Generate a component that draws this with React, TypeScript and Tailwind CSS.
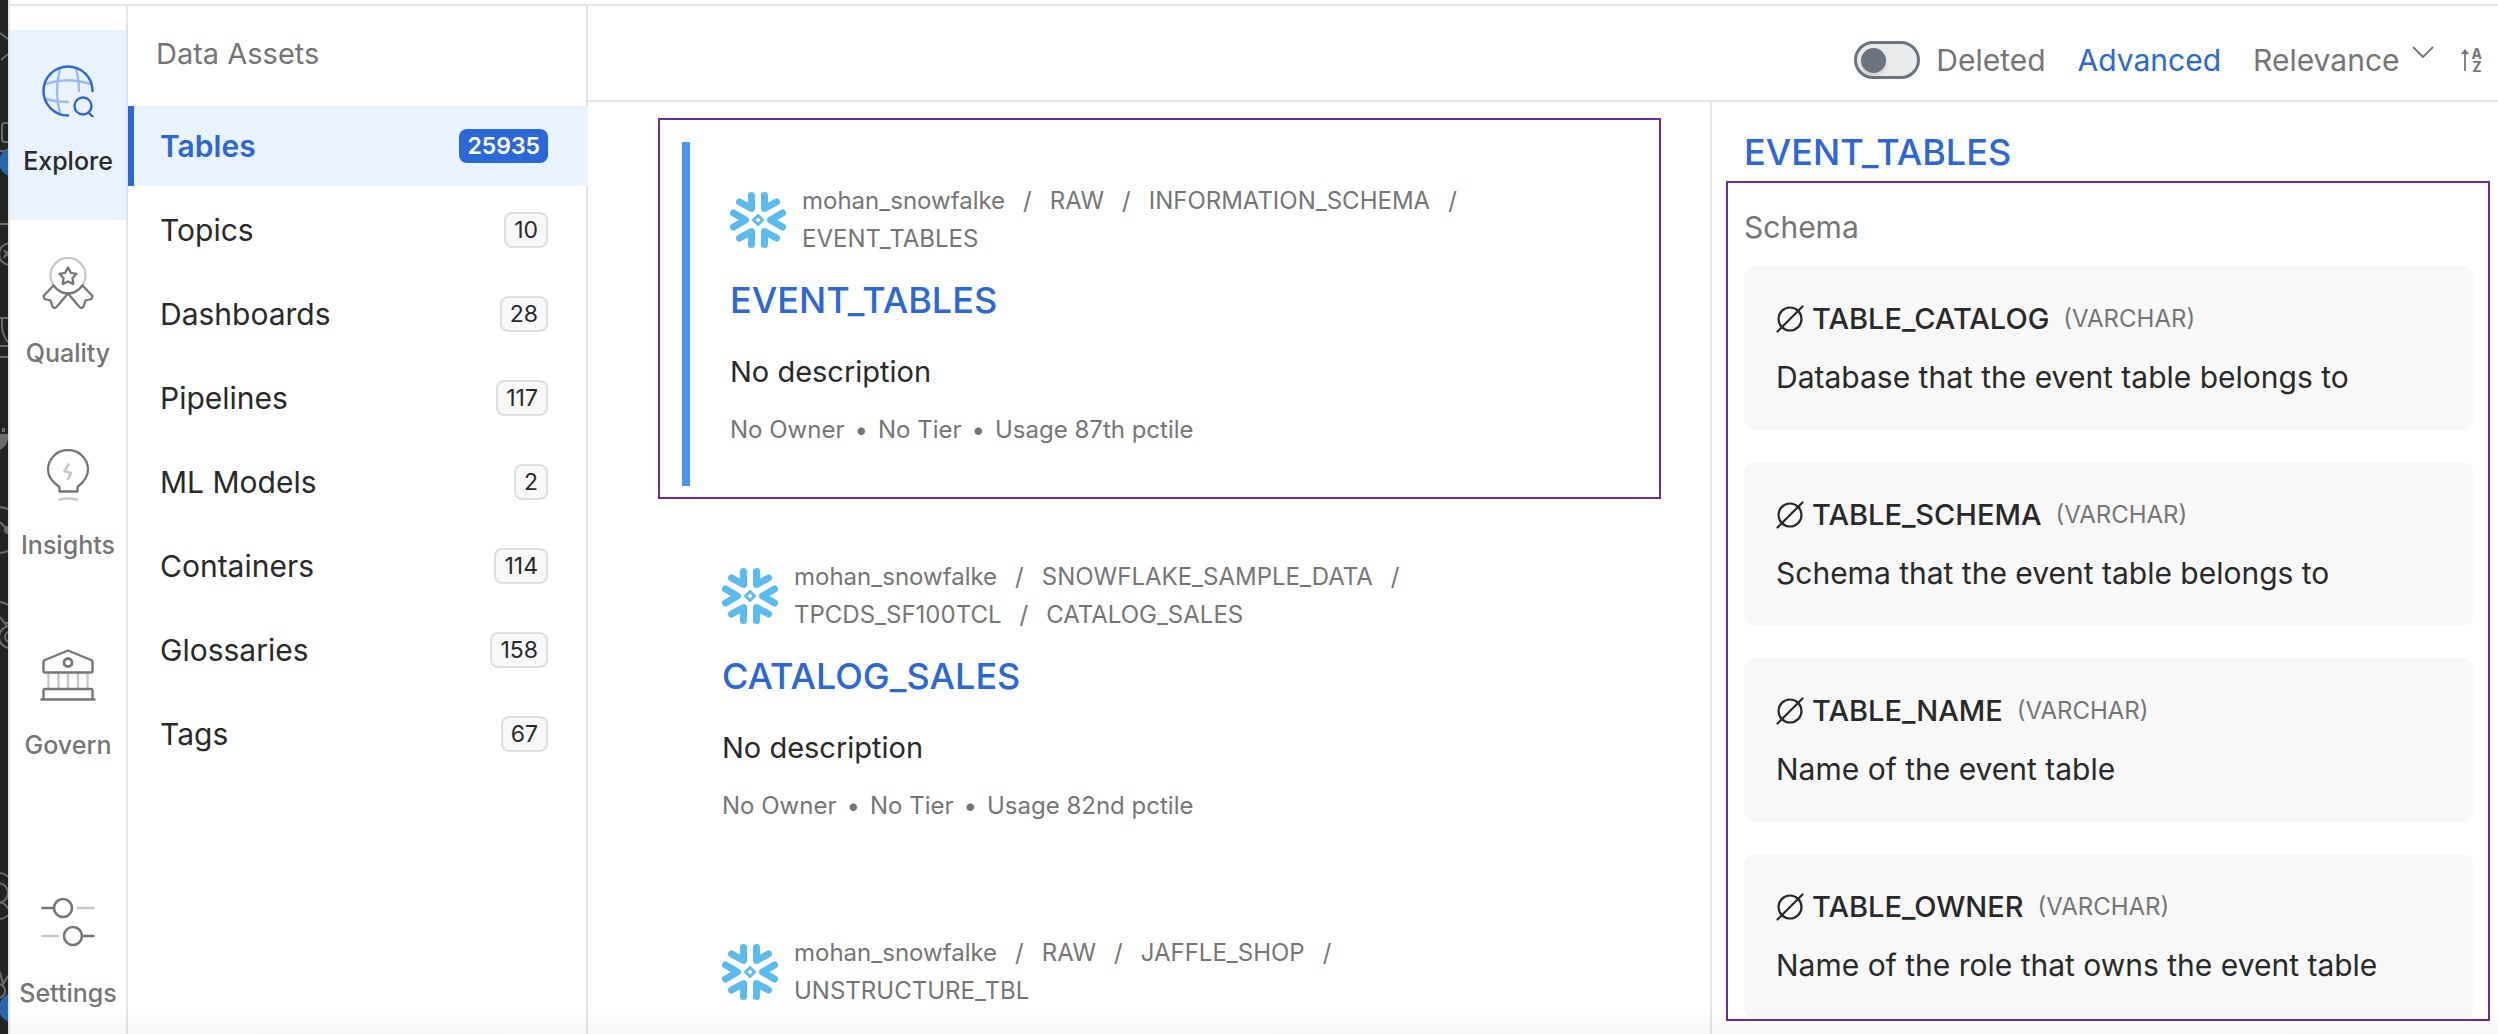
import React from "react";

const BLUE = "#2c67d6";

const Glyphs = {
  explore: (
    <svg viewBox="0 0 52 52" className="size-[52px]" fill="none" stroke={BLUE} strokeWidth="2.4" strokeLinecap="round">
      <path d="M50.500 26A24.500 24.500 0 1 0 26 50.500" />
      <circle cx="41" cy="41" r="8.500" />
      <path d="M46.500 47.500L50.500 51.500" />
      <g opacity="0.4">
        <path d="M5 18.500Q26 12 47 18.500" />
        <path d="M4 34Q14 37 26 37" />
        <path d="M18 4Q12 26 18 48" />
        <path d="M34 4Q37 14 37 26" />
      </g>
    </svg>
  ),
  quality: (
    <svg viewBox="0 0 52 52" className="size-[52px]" fill="none" stroke="#757575" strokeWidth="2.3" strokeLinejoin="round" strokeLinecap="round">
      <path d="M12.500 29.500A17.500 17.500 0 1 1 39.500 29.500" opacity="0.4" />
      <path d="M12 29Q18 36.500 26 36.500Q34 36.500 40 29" />
      <path d="M26 10.500L28.800 15.800L34.500 16.800L30.500 21L31.300 27L26 24.500L20.700 27L21.500 21L17.500 16.800L23.200 15.800Z" />
      <path d="M11.500 28.500L1.500 39L2.500 42L8.500 43.500L10.500 49.500Q12.500 52 14.500 50L26 36.500L37.500 50Q39.500 52 41.500 49.500L43.500 43.500L49.500 42L50.500 39L40.500 28.500" />
    </svg>
  ),
  insights: (
    <svg viewBox="0 0 52 52" className="size-[52px]" fill="none" stroke="#757575" strokeWidth="2.3" strokeLinejoin="round" strokeLinecap="round">
      <path d="M17.500 42.500V38C10 33 6 28 6 20.500A20 19.500 0 0 1 46 20.500C46 28 42 33 35.500 38V42.500Z" />
      <path d="M26.500 15.500L22.500 22L29 24L26 30M17.500 50.500Q26 48.500 35 50.500" opacity="0.4" strokeWidth="2.600" />
    </svg>
  ),
  govern: (
    <svg viewBox="0 0 56 52" className="h-[52px] w-14" fill="none" stroke="#757575" strokeWidth="2.4" strokeLinejoin="round" strokeLinecap="round">
      <path d="M3.500 13Q3.500 11.500 5 11L28 1.500L51 11Q52.500 11.500 52.500 13V22Q52.500 23.500 51 23.500H5Q3.500 23.500 3.500 22Z" />
      <circle cx="28" cy="13.500" r="4" strokeWidth="2.8" />
      <path d="M3.500 50V42Q3.500 40 5.500 40H50.500Q52.500 40 52.500 42V50M1.500 50.500H54.500" />
      <path d="M8.500 25V39M18.500 25V39M28 25V39M38 25V39M47.500 25V39" opacity="0.4" />
    </svg>
  ),
  settings: (
    <svg viewBox="0 0 54 52" className="h-[52px] w-[54px]" fill="none" stroke="#757575" strokeWidth="2.6" strokeLinecap="round">
      <circle cx="22" cy="11" r="9" />
      <circle cx="32" cy="39" r="9" />
      <path d="M1.500 11H12M42 39H52.500" />
      <path d="M37 11H52.500M1.500 39H17" opacity="0.4" />
    </svg>
  ),
};

function WindowEdge() {
  return (
    <svg viewBox="0 0 8 1034" preserveAspectRatio="xMinYMin slice" className="h-full w-2 shrink-0 bg-[#232323]" fill="none" stroke="#6b6b6b" strokeWidth="2">
      <path d="M0 33L8 39M1 60L8 54M8 123H5Q2 123 2 126V139Q2 142 5 142H8M0 151H8M0 224H8" />
      <circle cx="14" cy="162" r="15" fill="#2b66ad" stroke="none" />
      <circle cx="10" cy="254" r="11" />
      <path d="M4 250L8 256M8 251L4 258M0 318H8M2 318V328Q3 336 8 342M0 346H8M0 357H8" />
      <path d="M0 434H8V440Q6 447 0 450Z M2 428H5V432H2Z" fill="#6b6b6b" stroke="none" />
      <circle cx="-2" cy="530" r="23" />
      <circle cx="8" cy="530" r="4" fill="#6b6b6b" stroke="none" />
      <path d="M0 522L6 528M0 602Q6 603 8 605M0 617L7 626M8 623H4" />
      <circle cx="10" cy="637" r="11" />
      <circle cx="10" cy="637" r="5" />
      <path d="M0 873Q6 874 8 877M0 919Q6 918 8 915" />
      <circle cx="-2" cy="893" r="10" />
      <path d="M0 902Q6 904 8 909M0 972L3 984L8 976" />
      <circle cx="-2" cy="991" r="7" />
      <circle cx="14" cy="1008" r="15" fill="#2b66ad" stroke="none" />
    </svg>
  );
}

function NavItem({ label, icon, active = false, className = "" }: { label: string; icon: React.ReactNode; active?: boolean; className?: string }) {
  return (
    <a
      href="#"
      className={`flex flex-col items-center gap-7 pt-[35px] pb-[43px] text-[25px] leading-8 font-medium ${active ? "bg-[#e8f3ff] text-[#292929]" : "text-[#757575]"} ${className}`}
    >
      {icon}
      <span>{label}</span>
    </a>
  );
}

function Snowflake() {
  return (
    <svg viewBox="0 0 56 56" className="size-14 shrink-0" fill="none" stroke="#5bbbee" strokeWidth="7" strokeLinecap="round" strokeLinejoin="round">
      <path d="M21.500 3.500V16.500L9.500 10M34.500 3.500V16.500L46.500 10" />
      <path d="M21.500 52.500V39.500L9.500 46M34.500 52.500V39.500L46.500 46" />
      <path d="M3.500 21L15.500 28L3.500 35M52.500 21L40.500 28L52.500 35" />
      <path d="M28 23.500L32.500 28L28 32.500L23.500 28Z" strokeWidth="3" />
    </svg>
  );
}

const assets = [
  ["Tables", "25935"],
  ["Topics", "10"],
  ["Dashboards", "28"],
  ["Pipelines", "117"],
  ["ML Models", "2"],
  ["Containers", "114"],
  ["Glossaries", "158"],
  ["Tags", "67"],
];

function AssetRow({ name, count, active }: { name: string; count: string; active: boolean }) {
  return (
    <button
      type="button"
      className={`flex h-20 items-center justify-between border-l-[6px] pl-[26px] text-left text-[30px] ${active ? "-mr-0.5 border-[#2c67d6] bg-[#e8f3ff] pr-10 font-semibold text-[#2c67d6]" : "border-transparent pr-[38px] text-[#292929]"}`}
    >
      <span>{name}</span>
      <span
        className={`rounded-lg px-2 text-[23px] leading-8 ${active ? "bg-[#2c67d6] py-px text-white" : "border-2 border-[#dedede] bg-[#f8f8f8]"}`}
      >
        {count}
      </span>
    </button>
  );
}

type Result = { path: string[]; title?: string; usage?: string };

const results: Result[] = [
  { path: ["mohan_snowfalke", "RAW", "INFORMATION_SCHEMA", "EVENT_TABLES"], title: "EVENT_TABLES", usage: "Usage 87th pctile" },
  { path: ["mohan_snowfalke", "SNOWFLAKE_SAMPLE_DATA", "TPCDS_SF100TCL", "CATALOG_SALES"], title: "CATALOG_SALES", usage: "Usage 82nd pctile" },
  { path: ["mohan_snowfalke", "RAW", "JAFFLE_SHOP", "UNSTRUCTURE_TBL"] },
];

function ResultCard({ item, selected = false }: { item: Result; selected?: boolean }) {
  return (
    <article className={`pt-10 pl-10 ${item.title ? "pb-10" : ""} ${selected ? "border-l-8 border-[#4a94ee]" : ""}`}>
      <div className="flex items-center gap-4">
        <Snowflake />
        <nav aria-label="Breadcrumb" className="flex max-w-[700px] flex-wrap text-[24px] leading-[38px] text-[#757575]">
          {item.path.map((part, i) => (
            <span key={part} className="whitespace-nowrap">
              <a href="#">{part}</a>
              {i < item.path.length - 1 && <span className="mx-[18px]">/</span>}
            </span>
          ))}
        </nav>
      </div>
      {item.title && (
        <>
          <h2 className="mt-5 text-[36px] leading-11 font-medium text-[#2c67d6]">
            <a href="#">{item.title}</a>
          </h2>
          <p className="mt-[30px] text-[29px] leading-10 text-[#292929]">No description</p>
          <p className="mt-[22px] flex gap-2.5 text-[24px] leading-8 text-[#757575]">
            <span>No Owner</span>
            <span>•</span>
            <span>No Tier</span>
            <span>•</span>
            <span>{item.usage}</span>
          </p>
        </>
      )}
    </article>
  );
}

const columns = [
  ["TABLE_CATALOG", "Database that the event table belongs to"],
  ["TABLE_SCHEMA", "Schema that the event table belongs to"],
  ["TABLE_NAME", "Name of the event table"],
  ["TABLE_OWNER", "Name of the role that owns the event table"],
];

function ColumnCard({ name, text }: { name: string; text: string }) {
  return (
    <li className="rounded-xl bg-[#f8f8f8] p-8">
      <div className="flex items-center gap-2 leading-[42px]">
        <svg viewBox="0 0 28 28" className="size-7 shrink-0" fill="none" stroke="#292929" strokeWidth="2.2" strokeLinecap="round">
          <circle cx="14" cy="14" r="11.500" />
          <path d="M1.500 26.500L26.500 1.500" />
        </svg>
        <span className="text-[29px] font-medium text-[#292929]">{name}</span>
        <span className="ml-1.5 text-[24px] text-[#757575]">(VARCHAR)</span>
      </div>
      <p className="mt-4 text-[30px] leading-[42px] text-[#292929]">{text}</p>
    </li>
  );
}

export default function App() {
  return (
    <div className="relative flex h-screen overflow-hidden bg-white font-[Inter,sans-serif]">
      <WindowEdge />
      <div className="flex min-w-0 flex-1 flex-col border-l-2 border-[#e4e4e4]">
        <div className="mt-1 h-0.5 shrink-0 bg-[#e4e4e4]" />
        <div className="flex min-h-0 flex-1">
          <nav aria-label="Main" className="flex w-[118px] shrink-0 flex-col gap-0.5 border-r-2 border-[#e4e4e4] pt-6">
            <NavItem label="Explore" icon={Glyphs.explore} active />
            <NavItem label="Quality" icon={Glyphs.quality} />
            <NavItem label="Insights" icon={Glyphs.insights} />
            <NavItem label="Govern" icon={Glyphs.govern} className="mt-2" />
            <NavItem label="Settings" icon={Glyphs.settings} className="mt-auto -mb-[18px]" />
          </nav>

          <aside className="flex w-[460px] shrink-0 flex-col gap-1 border-r-2 border-[#e4e4e4]">
            <h1 className="h-24 pt-7 pl-7 text-[29px] leading-10 text-[#757575]">Data Assets</h1>
            {assets.map(([name, count], i) => (
              <AssetRow key={name} name={name} count={count} active={i === 0} />
            ))}
          </aside>

          <div className="flex min-w-0 flex-1 flex-col">
            <header className="flex h-24 shrink-0 items-center justify-end border-b-2 border-[#e4e4e4] pt-3.5 pr-4 text-[30px] text-[#757575]">
              <label className="flex items-center gap-4">
                <input type="checkbox" role="switch" className="peer sr-only" />
                <span className="flex h-[38px] w-[66px] items-center rounded-full border-3 border-[#6b7280] bg-[#e9eaec] pl-1">
                  <span className="size-[25px] rounded-full bg-[#6b7280] shadow-md" />
                </span>
                Deleted
              </label>
              <button type="button" className="ml-8 text-[#2c67d6]">Advanced</button>
              <button type="button" className="ml-8 flex items-center gap-3">
                Relevance
                <svg viewBox="0 0 22 12" className="mb-4 h-3 w-[22px]" fill="none" stroke="#757575" strokeWidth="1.8">
                  <path d="M1 1L11 11L21 1" />
                </svg>
              </button>
              <button type="button" aria-label="Sort order" className="ml-[26px] flex items-center gap-0.5">
                <svg viewBox="0 0 10 24" className="h-6 w-2.5" fill="none" stroke="#757575" strokeWidth="1.8">
                  <path d="M5 23V4" />
                  <path d="M5 1L9 6H1Z" fill="#757575" stroke="none" />
                </svg>
                <span className="flex flex-col text-[14px] leading-[13px] font-bold">
                  <span>A</span>
                  <span>Z</span>
                </span>
              </button>
            </header>

            <div className="flex min-h-0 flex-1">
              <main className="min-w-0 flex-[1003] overflow-hidden pt-4 pr-[49px] pl-[70px]">
                <div className="border-2 border-[#7028a0] px-[22px] pt-[22px] pb-[11px]">
                  <ResultCard item={results[0]} selected />
                </div>
                <div className="mt-[19px] flex flex-col gap-8 px-6">
                  <ResultCard item={results[1]} />
                  <ResultCard item={results[2]} />
                </div>
              </main>

              <aside className="min-w-0 flex-[764] border-l-2 border-[#e4e4e4] pt-7 pr-2 pl-3.5">
                <h2 className="pl-[18px] text-[36px] leading-11 font-medium text-[#2c67d6]">
                  <a href="#">EVENT_TABLES</a>
                </h2>
                <section className="mt-[7px] border-2 border-[#7028a0] pt-6 pr-3.5 pb-px pl-4">
                  <h3 className="text-[30px] leading-10 text-[#757575]">Schema</h3>
                  <ul className="mt-[19px] flex flex-col gap-8">
                    {columns.map(([name, text]) => (
                      <ColumnCard key={name} name={name} text={text} />
                    ))}
                  </ul>
                </section>
              </aside>
            </div>
          </div>
        </div>
      </div>
      <div className="pointer-events-none absolute right-0 bottom-0 left-2 h-7 bg-linear-to-b from-black/0 to-black/3" />
    </div>
  );
}
